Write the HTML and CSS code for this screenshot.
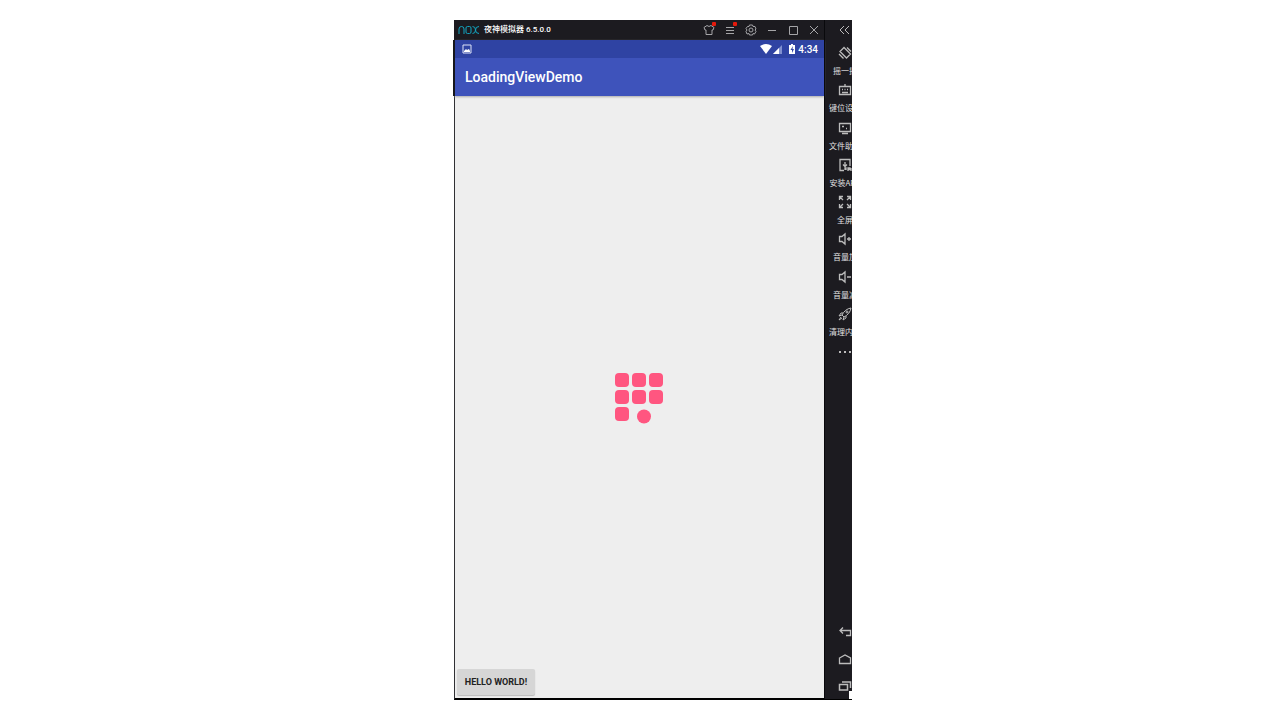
FILE: index.html
```html
<!DOCTYPE html>
<html lang="zh-CN">
<head>
<meta charset="utf-8">
<meta name="viewport" content="width=device-width, initial-scale=1">
<title>LoadingViewDemo</title>
<link rel="stylesheet" href="styles.css">
</head>
<body>
<main class="emulator">
  <section class="main-column">
    <header class="titlebar">
      <svg class="logo" viewBox="0 0 22 10" aria-label="nox"><path d="M1 9V4Q1 1.500 3.500 1.500T6 4V9M9.500 1.500H11.500Q13 1.500 13 3V7Q13 8.500 11.500 8.500H9.500Q8 8.500 8 7V3Q8 1.500 9.500 1.500M14.500 1.500Q17.500 1.500 17.500 5Q17.500 8.500 21 8.500M21 1.500Q17.500 1.500 17.500 5Q17.500 8.500 14.500 8.500"/></svg>
      <h1 class="window-title">夜神模拟器 6.5.0.0</h1>
      <nav class="controls" aria-label="窗口">
        <button class="control alert" aria-label="主题"><svg viewBox="0 0 12 12"><path d="M4 1.500L1 3.500L2 6H3V10.500H9V6H10L11 3.500L8 1.500Q6 3.500 4 1.500Z"/></svg></button>
        <button class="control alert" aria-label="菜单"><svg viewBox="0 0 12 12"><path d="M2 3.500H10M2 6.500H10M2 9.500H10"/></svg></button>
        <button class="control" aria-label="设置"><svg viewBox="0 0 12 12"><path d="M4.500 1H7.500L8 2.500L10 2.500L11 5L10 6L11 7.500L9.500 10L8 9.500L7.500 11H4.500L4 9.500L2 10L1 7.500L2 6L1 4.500L2.500 2.500H4Z"/><circle cx="6" cy="6" r="2"/></svg></button>
        <button class="control" aria-label="最小化"><svg viewBox="0 0 12 12"><path d="M2 6.500H10"/></svg></button>
        <button class="control" aria-label="最大化"><svg viewBox="0 0 12 12"><path d="M2.500 2.500H10.500V10.500H2.500Z"/></svg></button>
        <button class="control" aria-label="关闭"><svg viewBox="0 0 12 12"><path d="M2 2L10 10M10 2L2 10"/></svg></button>
      </nav>
    </header>
    <div class="device">
      <div class="device-top">
        <div class="statusbar">
          <svg class="picture" viewBox="0 0 10 10"><path d="M1 1H9V9H1Z" fill="none" stroke="#dfe4f7"/><path d="M2 8V7L4 5L5 6L7 5L8 7V8Z" fill="#fff"/></svg>
          <svg class="signals" viewBox="0 0 36 12"><path d="M0 3Q6-1 12 3L6 11Z" fill="#fff"/><path d="M13 11L22 2V11Z" fill="#8190cf"/><path d="M13 11L19 5V11Z" fill="#fff"/><path d="M29 2H31V1H33V2H35V11H29Z" fill="#fff"/><path d="M33 3L30.500 7H32V10L34 6H32.500Z" fill="#3044a5"/></svg>
          <time class="clock">4:34</time>
        </div>
        <div class="appbar"><h2 class="app-title">LoadingViewDemo</h2></div>
      </div>
      <div class="content">
        <svg class="loader" viewBox="0 0 52 50" role="img" aria-label="Loading"><rect x="1" y="1" width="14" height="14" rx="4"/><rect x="18" y="1" width="14" height="14" rx="4"/><rect x="35" y="1" width="14" height="14" rx="4"/><rect x="1" y="18" width="14" height="14" rx="4"/><rect x="18" y="18" width="14" height="14" rx="4"/><rect x="35" y="18" width="14" height="14" rx="4"/><rect x="1" y="35" width="14" height="14" rx="4"/><circle cx="30" cy="44.500" r="7"/></svg>
        <button class="hello">HELLO WORLD!</button>
      </div>
    </div>
  </section>
  <aside class="sidebar">
    <div class="rail">
      <button class="collapse" aria-label="收起"><svg viewBox="0 0 14 14"><path d="M6 3L2 7L6 11M11 3L7 7L11 11"/></svg></button>
      <div class="tools">
        <button class="tool"><svg viewBox="0 0 14 14"><path d="M6 1.500L2 5.500L8.500 12L12.500 8ZM9 1.500L13 5.500M1 8L5.500 12.500" stroke-width="1.300"/></svg><span>摇一摇</span></button>
        <button class="tool"><svg viewBox="0 0 14 14"><path d="M1.500 3.500H12.500V11.500H1.500ZM7 1V3M4 6.500H5M6.500 6.500H7.500M9 6.500H10M4 9.500H10" stroke-width="1.300"/></svg><span>键位设置</span></button>
        <button class="tool"><svg viewBox="0 0 14 14"><path d="M1.500 2.500H12.500V10.500H1.500ZM4 12.500H10M4 5.500H6M8 7.500H9" stroke-width="1.300"/></svg><span>文件助手</span></button>
        <button class="tool"><svg viewBox="0 0 14 14"><path d="M6 12.500H2V1.500H12V8M7 4V8M5 6.500L7 8.500L9 6.500M7 12V10H8V12M10 13V10H12V11.500H10M13 10V13" stroke-width="1.300"/></svg><span>安装APK</span></button>
        <button class="tool"><svg viewBox="0 0 14 14"><path d="M5 1.500H1.500V5M2 2L5 5M9 1.500H12.500V5M12 2L9 5M1.500 9V12.500H5M2 12L5 9M9 12.500H12.500V9M12 12L9 9" stroke-width="1.300"/></svg><span>全屏</span></button>
        <button class="tool"><svg viewBox="0 0 14 14"><path d="M1.500 4.500H4L7 2V12L4 9.500H1.500ZM9 7H13M11 5V9" stroke-width="1.300"/></svg><span>音量加</span></button>
        <button class="tool"><svg viewBox="0 0 14 14"><path d="M1.500 4.500H4L7 2V12L4 9.500H1.500ZM9 7H13" stroke-width="1.300"/></svg><span>音量减</span></button>
        <button class="tool"><svg viewBox="0 0 14 14"><path d="M4 8Q7 2 13 1Q12 7 6 10ZM5 6H3L1 9L4 8M8 9V11L5 13L6 10M3 10L1 13L4 11"/><circle cx="9" cy="5" r="1"/></svg><span>清理内存</span></button>
      </div>
      <button class="more" aria-label="更多"><svg viewBox="0 0 14 14"><path d="M1 7H3M6 7H8M11 7H13" stroke-width="2"/></svg></button>
      <nav class="system" aria-label="系统">
        <button aria-label="返回"><svg viewBox="0 0 14 14"><path d="M5 2.500L2 5.500L5 8.500M2 5.500H12.500V10.500H8" stroke-width="1.300"/></svg></button>
        <button aria-label="主页"><svg viewBox="0 0 14 14"><path d="M1.500 6L7 3L12.500 6V11.500H1.500Z" stroke-width="1.300"/></svg></button>
        <button aria-label="最近任务"><svg viewBox="0 0 14 14"><path d="M1.500 5.500H9.500V11H1.500ZM4 3H12.500V9" stroke-width="1.500"/></svg></button>
      </nav>
    </div>
    <span class="resize-corner"></span>
  </aside>
</main>
</body>
</html>
```
FILE: styles.css
```css
* { box-sizing: border-box; }
body {
  margin: 0;
  min-height: 100vh;
  padding: 20px 0 20px 26px;
  display: flex;
  justify-content: center;
  background: #fff;
  font-family: Roboto, "Noto Sans CJK SC", sans-serif;
}
button {
  margin: 0;
  padding: 0;
  border: 0;
  background: none;
  color: inherit;
  font: inherit;
}
h1, h2 { margin: 0; }
svg { display: block; flex: none; }
.emulator {
  display: flex;
  width: 100%;
  max-width: 398px;
  background: #1c1b20;
  color: #c8c8c8;
}
.main-column {
  flex: 1;
  min-width: 0;
  display: flex;
  flex-direction: column;
}
.titlebar {
  height: 20px;
  display: flex;
  align-items: center;
  padding-left: 4px;
}
.logo {
  width: 22px;
  height: 10px;
  fill: none;
  stroke: #12a5c0;
}
.window-title {
  margin-left: 4px;
  font: 500 8px/20px Roboto, "Noto Sans CJK SC", sans-serif;
  color: #fff;
  white-space: nowrap;
}
.controls { display: flex; margin-left: auto; gap: 1px; }
.control {
  position: relative;
  width: 20px;
  height: 20px;
  display: grid;
  place-items: center;
}
.control svg {
  width: 12px;
  height: 12px;
  fill: none;
  stroke: #a5a5a8;
}
.alert::after {
  content: "";
  position: absolute;
  top: 2px;
  right: 3px;
  width: 4px;
  height: 4px;
  border-radius: 1px;
  background: #e51a0c;
}
.device {
  flex: 1;
  display: flex;
  flex-direction: column;
  border-left: 1px solid #303034;
  border-bottom: 2px solid #000;
}
.device-top {
  position: relative;
  box-shadow: -2px 0 #16161c, 0 1px 2px #aaa;
}
.statusbar {
  height: 18px;
  display: flex;
  align-items: center;
  padding: 0 6px 0 7px;
  background: #2f43a3;
}
.picture { width: 10px; height: 10px; }
.signals { width: 36px; height: 12px; margin-left: auto; }
.clock {
  margin-left: 2px;
  font-size: 10px;
  font-weight: 500;
  color: #fff;
}
.appbar {
  height: 38px;
  display: flex;
  align-items: center;
  padding-left: 10px;
  background: #3e53bb;
}
.app-title {
  font-size: 14px;
  font-weight: 500;
  color: #fff;
}
.content {
  flex: 1;
  display: grid;
  grid-template-rows: 1fr auto;
  background: #eee;
}
.loader {
  grid-area: 1 / 1 / 3 / 2;
  place-self: center;
  width: 52px;
  height: 50px;
  overflow: visible;
  fill: #ff5680;
}
.hello {
  grid-area: 2 / 1;
  justify-self: start;
  height: 26px;
  min-width: 78px;
  margin: 0 2px 3px;
  padding: 0 6px;
  border-radius: 2px;
  background: #d6d6d6;
  box-shadow: 0 1px 1px #bbb;
  color: #222;
  font-size: 9px;
  font-weight: 700;
}
.sidebar {
  position: relative;
  width: 28px;
  border-left: 1px solid #09090c;
  border-bottom: 1px solid #000;
  overflow: hidden;
}
.rail {
  width: 40px;
  height: 100%;
  display: flex;
  flex-direction: column;
}
.rail svg {
  width: 14px;
  height: 14px;
  margin: 0 auto;
  fill: none;
  stroke: #bcbcbc;
}
.collapse { height: 20px; margin-bottom: 6px; }
.tools {
  height: 298px;
  display: grid;
  grid-template-rows: repeat(8, 1fr);
}
.tool {
  display: flex;
  flex-direction: column;
  align-items: center;
  gap: 5px;
  font-family: "Noto Sans CJK SC", sans-serif;
  font-size: 8px;
  line-height: 12px;
  color: #e0e0e0;
  white-space: nowrap;
}
.more { height: 16px; }
.system {
  margin-top: auto;
  margin-bottom: 6px;
  display: grid;
  gap: 13px;
}
.resize-corner {
  position: absolute;
  right: 0;
  bottom: 0;
  width: 3px;
  height: 8px;
  background: #fff;
}
```
